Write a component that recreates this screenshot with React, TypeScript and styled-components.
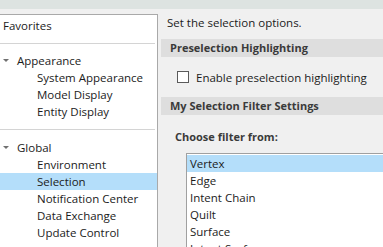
import React from "react";
import styled, { createGlobalStyle } from "styled-components";

const GlobalStyle = createGlobalStyle`
  html, body {
    margin: 0;
    padding: 0;
    background: #f0f0f0;
    overflow: hidden;
  }
  body {
    font-family: "Open Sans", "Noto Sans", sans-serif;
    font-size: 11.5px;
    color: #1b1b1b;
  }
`;

const Page = styled.div`
  width: 383px;
  height: 247px;
  display: flex;
  flex-direction: column;
  overflow: hidden;
`;

const TopBar = styled.div`
  height: 9px;
  background: #dde3e1;
  flex-shrink: 0;
`;

const Body = styled.div`
  flex: 1;
  display: flex;
  min-height: 0;
`;

const TreePanel = styled.div`
  margin-top: 5px;
  width: 157px;
  flex-shrink: 0;
  background: #fff;
  border: 1px solid #a9a9a9;
  border-left: none;
  border-bottom: none;
`;

const Group = styled.div<{ $top?: number }>`
  padding: ${(p) => p.$top ?? 8}px 0 9px;
`;

const Divider = styled.div`
  height: 1px;
  margin-right: 2px;
  background: #d4d4d4;
`;

const Row = styled.div<{ $indent: number; $selected?: boolean }>`
  height: 17px;
  line-height: 17px;
  display: flex;
  align-items: center;
  padding-left: ${(p) => p.$indent}px;
  background: ${(p) => (p.$selected ? "#b4defa" : "transparent")};
  white-space: nowrap;
`;

const Caret = styled.span`
  width: 0;
  height: 0;
  border-left: 3px solid transparent;
  border-right: 3px solid transparent;
  border-top: 3px solid #707070;
  margin-right: 8px;
  margin-left: -14px;
`;

const Content = styled.div`
  flex: 1;
  padding: 5px 0 0 1px;
  margin-left: 2px;
  min-width: 0;
`;

const Intro = styled.div`
  line-height: 17px;
  padding-left: 6px;
  margin-bottom: 8px;
`;

const Band = styled.div`
  height: 18px;
  line-height: 18px;
  background: #dedede;
  padding-left: 9px;
  font-size: 11px;
  font-weight: 700;
  color: #3a3a3a;
`;

const CheckRow = styled.label`
  display: flex;
  align-items: center;
  gap: 7px;
  height: 12px;
  margin: 14px 0 14px 16px;
`;

const Box = styled.span`
  width: 10px;
  height: 10px;
  border: 1px solid #5a5a5a;
  background: #fff;
`;

const Label = styled.div`
  line-height: 17px;
  margin: 13px 0 8px 14px;
  font-size: 11px;
  font-weight: 700;
  color: #3a3a3a;
`;

const ListBox = styled.div`
  margin-left: 25px;
  margin-right: -20px;
  background: #fff;
  border: 1px solid #a0a0a0;
  padding-top: 1px;
  height: 120px;
`;

const Item = styled.div<{ $selected?: boolean }>`
  height: 17px;
  line-height: 17px;
  padding-left: 3px;
  background: ${(p) => (p.$selected ? "#b4defa" : "transparent")};
`;

const filters = ["Vertex", "Edge", "Intent Chain", "Quilt", "Surface", "Intent Surface"];

export default function App() {
  return (
    <Page>
      <GlobalStyle />
      <TopBar />
      <Body>
        <TreePanel>
          <Group $top={2}>
            <Row $indent={3}>Favorites</Row>
          </Group>
          <Divider />
          <Group>
            <Row $indent={17}>
              <Caret />
              Appearance
            </Row>
            <Row $indent={37}>System Appearance</Row>
            <Row $indent={37}>Model Display</Row>
            <Row $indent={37}>Entity Display</Row>
          </Group>
          <Divider />
          <Group $top={9}>
            <Row $indent={17}>
              <Caret />
              Global
            </Row>
            <Row $indent={37}>Environment</Row>
            <Row $indent={37} $selected>
              Selection
            </Row>
            <Row $indent={37}>Notification Center</Row>
            <Row $indent={37}>Data Exchange</Row>
            <Row $indent={37}>Update Control</Row>
          </Group>
        </TreePanel>
        <Content>
          <Intro>Set the selection options.</Intro>
          <Band>Preselection Highlighting</Band>
          <CheckRow>
            <Box />
            Enable preselection highlighting
          </CheckRow>
          <Band>My Selection Filter Settings</Band>
          <Label>Choose filter from:</Label>
          <ListBox>
            {filters.map((f, i) => (
              <Item key={f} $selected={i === 0}>
                {f}
              </Item>
            ))}
          </ListBox>
        </Content>
      </Body>
    </Page>
  );
}
